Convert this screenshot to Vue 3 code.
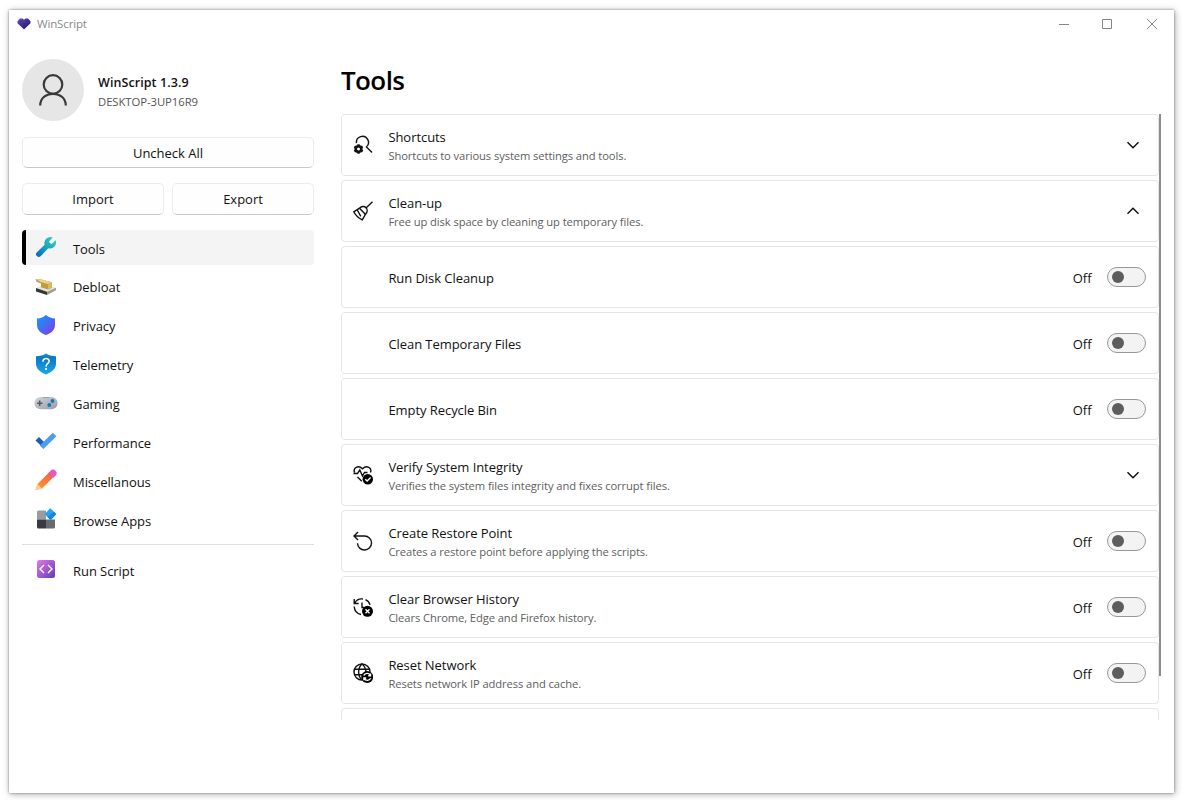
<script setup>
import { ref } from "vue";

const current = ref("Tools");

const pages = [
  "Tools",
  "Debloat",
  "Privacy",
  "Telemetry",
  "Gaming",
  "Performance",
  "Miscellanous",
  "Browse Apps",
];

const cards = ref([
  {
    icon: "search",
    title: "Shortcuts",
    text: "Shortcuts to various system settings and tools.",
    open: false,
  },
  {
    icon: "broom",
    title: "Clean-up",
    text: "Free up disk space by cleaning up temporary files.",
    open: true,
  },
  { title: "Run Disk Cleanup", on: false },
  { title: "Clean Temporary Files", on: false },
  { title: "Empty Recycle Bin", on: false },
  {
    icon: "heart",
    title: "Verify System Integrity",
    text: "Verifies the system files integrity and fixes corrupt files.",
    open: false,
  },
  {
    icon: "restore",
    title: "Create Restore Point",
    text: "Creates a restore point before applying the scripts.",
    on: false,
  },
  {
    icon: "history",
    title: "Clear Browser History",
    text: "Clears Chrome, Edge and Firefox history.",
    on: false,
  },
  {
    icon: "network",
    title: "Reset Network",
    text: "Resets network IP address and cache.",
    on: false,
  },
]);

const toggle = (card) => {
  if ("on" in card) {
    card.on = !card.on;
  } else {
    card.open = !card.open;
  }
};
</script>

<template>
  <div class="window">
    <header class="titlebar">
      <svg class="logo" viewBox="0 0 14 12">
        <defs>
          <linearGradient id="logo" x1="0" y1="0" x2="1" y2="1">
            <stop offset="0" stop-color="#5c4ac0" />
            <stop offset="1" stop-color="#27125f" />
          </linearGradient>
        </defs>
        <path d="M3 .5h2.500L7 1.800 8.500.5H11l2.500 2.800v2L7 11.500.5 5.300v-2z" fill="url(#logo)" />
      </svg>
      <span class="app-name">WinScript</span>
      <svg class="controls" viewBox="0 0 100 12">
        <path d="M1 6.500h10M44.500 1.500h9v9h-9zM89 1l10 10M99 1L89 11" />
      </svg>
    </header>

    <div class="content">
      <aside>
        <div class="profile">
          <div class="avatar">
            <svg viewBox="0 0 30 34">
              <circle cx="15" cy="11.500" r="9.300" />
              <path d="M2.200 32.500c0-7 5.300-11.700 12.800-11.700s12.800 4.700 12.800 11.700" />
            </svg>
          </div>
          <div>
            <p class="version">WinScript 1.3.9</p>
            <p class="machine">DESKTOP-3UP16R9</p>
          </div>
        </div>

        <div class="buttons">
          <button class="wide">Uncheck All</button>
          <button>Import</button>
          <button>Export</button>
        </div>

        <nav>
          <a
            v-for="page in pages"
            :key="page"
            :class="{ active: page === current }"
            @click="current = page"
          >
            <svg viewBox="0 0 24 24">
              <g v-if="page === 'Tools'">
                <linearGradient id="wrench" x1="1" y1="0" x2="0" y2="1">
                  <stop offset="0" stop-color="#3bd5b4" />
                  <stop offset=".5" stop-color="#16a6bd" />
                  <stop offset="1" stop-color="#0067bd" />
                </linearGradient>
                <path
                  fill="url(#wrench)"
                  d="M18.800 2.500a6 6 0 0 0-8.100 7.300L2.900 17.200a2.700 2.700 0 0 0 3.900 3.900l7.500-7.900a6 6 0 0 0 7.300-8l-3.400 3.400c-.5.500-1.100.5-1.600 0l-1.100-1.100c-.5-.5-.5-1.100 0-1.600z"
                />
              </g>
              <g v-else-if="page === 'Debloat'">
                <path fill="#e4e4e4" d="M2 14l7-3 13 2.700-9 4.300z" />
                <path fill="#34383a" d="M2 14l11 3.800v3.200L2 17.500z" />
                <path fill="#9a9d9f" d="M13 17.800l9-4.100v2.600l-9 4.700z" />
                <path fill="#c39a3e" d="M1.500 5l6 .5L18 8.300v5.500l-4 1.700-7-2.300V9.500L2.500 7.800z" />
                <path fill="#ead093" d="M1.500 5l6 .5L18 8.300l-4 1.700-7.500-2z" />
                <path fill="#ddb75e" d="M14 10l4-1.700v5.500l-4 1.700z" />
              </g>
              <g v-else-if="page === 'Privacy'">
                <linearGradient id="shield" x1="0" y1="0" x2="1" y2="1">
                  <stop offset="0" stop-color="#149cf5" />
                  <stop offset=".5" stop-color="#456cf3" />
                  <stop offset="1" stop-color="#9331de" />
                </linearGradient>
                <path
                  fill="url(#shield)"
                  d="M12 2c2.700 2.200 5.500 3.200 9 3.500v6.200c0 5.100-3.300 8.300-9 10.300-5.700-2-9-5.200-9-10.300V5.500c3.500-.3 6.300-1.300 9-3.500z"
                />
              </g>
              <g v-else-if="page === 'Telemetry'">
                <linearGradient id="help" x1="0" y1="0" x2="0" y2="1">
                  <stop offset="0" stop-color="#1593dc" />
                  <stop offset=".2" stop-color="#0a78c3" />
                  <stop offset="1" stop-color="#1da5ee" />
                </linearGradient>
                <path
                  fill="url(#help)"
                  d="M12 1.500c3 2 6 2.500 10 2.700v7.600c0 4.900-4 8.400-10 10.700C6 20.200 2 16.700 2 11.800V4.200C6 4 9 3.500 12 1.500z"
                />
                <path
                  d="M9 9.200c0-3.700 6.200-3.500 6.200 0 0 2.100-3.100 2.400-3.100 5"
                  fill="none"
                  stroke="#fff"
                  stroke-width="1.500"
                  stroke-linecap="round"
                />
                <circle cx="12" cy="17" r="1.100" fill="#fff" />
              </g>
              <g v-else-if="page === 'Gaming'">
                <linearGradient id="pad" x1="0" y1="0" x2="1" y2="1">
                  <stop offset="0" stop-color="#d2d6da" />
                  <stop offset="1" stop-color="#969ca5" />
                </linearGradient>
                <rect x=".4" y="6" width="23.200" height="12.300" rx="6.100" fill="url(#pad)" />
                <path d="M10 6v1M12 6v1M14 6v1" stroke="#747b82" />
                <path d="M3 12.200h5.500M5.700 9.500V15" stroke="#555b63" stroke-width="1.500" />
                <circle cx="18.500" cy="10" r="1.900" fill="#1875b9" />
                <circle cx="15.300" cy="14" r="1.900" fill="#1875b9" />
              </g>
              <g v-else-if="page === 'Performance'">
                <path fill="#1b5fbd" d="M1.500 11.500l3.500-3.500 5.300 5.200-3.300 3.500z" />
                <path fill="#4a9cf5" d="M5.800 16.500L18.800 3.800l3.600 3.500L9.400 20z" />
              </g>
              <g v-else-if="page === 'Miscellanous'">
                <linearGradient id="pencil" x1="1" y1="0" x2="0" y2="1">
                  <stop offset="0" stop-color="#f85747" />
                  <stop offset="1" stop-color="#ffa12b" />
                </linearGradient>
                <path fill="url(#pencil)" d="M3.500 16L15.500 4l4.500 4.500L8 20.500 1.500 22z" />
                <path fill="#ffd08b" d="M3.500 16L8 20.500l-6.500 1.800z" />
                <path fill="#e955c3" d="M14.500 5l2-2.200a3.500 3.500 0 0 1 5 5l-2.200 2z" />
              </g>
              <g v-else>
                <path fill="#989da2" d="M4.500 3.500H12v9H3V5a1.500 1.500 0 0 1 1.500-1.500z" />
                <path fill="#373a3e" d="M3 12.500h9v9H4.500A1.500 1.500 0 0 1 3 20z" />
                <path fill="#666b70" d="M12 12.500h9V20a1.500 1.500 0 0 1-1.500 1.500H12z" />
                <path fill="#22a3f4" d="M16.900 1.700l4.800 4.800c.4.400.4.900 0 1.300l-4.500 4.700c-.4.400-.9.400-1.300 0L11.200 7.700c-.4-.4-.4-.9 0-1.300l4.500-4.700c.4-.4.800-.4 1.200 0z" />
                <path fill="#1288e4" d="M21.700 7.800l-4.500 4.700c-.4.400-.9.400-1.300 0L13.500 10l6.300-5.400 1.900 1.900c.4.400.4.900 0 1.300z" />
              </g>
            </svg>
            {{ page }}
          </a>
        </nav>
        <nav class="run">
          <a>
            <svg viewBox="0 0 24 24">
              <linearGradient id="code" x1="0" y1="0" x2="1" y2="1">
                <stop offset="0" stop-color="#e377e8" />
                <stop offset="1" stop-color="#6739b8" />
              </linearGradient>
              <rect x="3" y="3" width="18" height="18" rx="2.500" fill="url(#code)" />
              <path
                d="M10 8l-4 4 4 4M14 8l4 4-4 4"
                fill="none"
                stroke="#fff"
                stroke-width="1.400"
              />
            </svg>
            Run Script
          </a>
        </nav>
      </aside>

      <main>
        <h1>Tools</h1>
        <div class="scroll">
          <div class="list">
            <section v-for="card in cards" :key="card.title" @click="toggle(card)">
              <div class="glyph">
                <svg v-if="card.icon" viewBox="0 0 20 20">
                  <g v-if="card.icon === 'search'">
                    <path d="M3.500 8.200A6 6 0 1 1 13 12.200M13 11.500l6 6" />
                    <circle cx="5.500" cy="14" r="2.800" stroke-width="2.600" />
                    <path
                      d="M5.500 9.300v2M5.500 16.700v2M1.400 11.600l1.800 1.100M7.800 15.300l1.800 1.100M1.400 16.400l1.800-1.100M7.800 12.700l1.800-1.100"
                      stroke-width="2.400"
                    />
                  </g>
                  <g v-else-if="card.icon === 'broom'">
                    <path d="M19.500.8l-6.500 6.200M6.500 7.200c2-2 4.800-2.200 6.500-.5s1.500 4.500-.5 6.500L9.300 18.900C5.500 17 2.500 14.500.8 10.800z" />
                    <path d="M6.500 7.200l6 6.300M4.300 9l3.500 6.300" />
                  </g>
                  <g v-else-if="card.icon === 'heart'">
                    <path d="M1.600 7.500C-.3 3 5.200-.5 9.500 3.800c4.300-4.300 9.800-.8 7.900 3.700M4.500 12l4.300 4.300M.5 8.500h4L6.800 5l2.700 6 2-3.500h3" />
                    <circle class="solid" cx="14.800" cy="14.200" r="5.200" />
                    <path class="light" d="M12.300 14.300l1.800 1.800 3.500-3.600" />
                  </g>
                  <g v-else-if="card.icon === 'restore'">
                    <path d="M5 1L1 5l4 4M1 5h10.500a7 7 0 1 1-7 7.300" stroke-width="1.400" />
                  </g>
                  <g v-else-if="card.icon === 'history'">
                    <path d="M1.200 2v4.500h4.500M1.800 6A8 8 0 0 1 10 2M12.500 2.600c2.400 1 4 3 4.500 5.300M1.200 9.500c.2 4.300 3 7.200 6.800 8M9 5.500v5h2" />
                    <circle class="solid" cx="14.500" cy="14.300" r="5.500" />
                    <path class="light" d="M12.500 12.300l4 4M16.500 12.300l-4 4" />
                  </g>
                  <g v-else>
                    <circle cx="9" cy="9" r="8" />
                    <path d="M1.500 6.200h15M1.500 11.800h8M9 17c-4.500-4-4.500-12 0-16 2.700 2.200 3.800 4.500 3.900 8" />
                    <circle class="solid" cx="14.200" cy="13.900" r="6" />
                    <path class="light" d="M10.800 12.500a3.600 3.600 0 0 1 6.400-.3M17.500 10.500v2.300h-2.300M17.600 15.300a3.600 3.600 0 0 1-6.400.3M10.900 17.300V15h2.300" />
                  </g>
                </svg>
              </div>
              <div class="label">
                <p class="title">{{ card.title }}</p>
                <p v-if="card.text" class="text">{{ card.text }}</p>
              </div>
              <template v-if="'on' in card">
                <span class="state">{{ card.on ? "On" : "Off" }}</span>
                <span class="switch" :class="{ on: card.on }"></span>
              </template>
              <svg v-else class="chevron" :class="{ up: card.open }" viewBox="0 0 14 8">
                <path d="M1.500 1.300L7 6.700l5.500-5.400" />
              </svg>
            </section>
            <section></section>
          </div>
          <div class="scrollbar"></div>
        </div>
      </main>
    </div>
  </div>
</template>

<style>
body {
  background: #fff;
}

#app {
  display: flow-root;
  height: 800px;
  overflow: hidden;
}
</style>

<style scoped>
.window {
  box-sizing: border-box;
  width: 1165px;
  height: 783px;
  margin: 10px 0 0 9px;
  background-color: #fff;
  box-shadow: 0 0 2px rgba(0, 0, 0, 0.4), 1px 1px 7px rgba(0, 0, 0, 0.35);
  font-family: "Open Sans", "Noto Sans", sans-serif;
  font-size: 13px;
  letter-spacing: -0.06px;
  color: #111;
}

p,
h1 {
  margin: 0;
}

.titlebar {
  display: flex;
  align-items: center;
  height: 27px;
  padding: 0 17px 0 8px;
}

.logo {
  width: 14px;
  height: 12px;
}

.app-name {
  margin-left: 6px;
  font-size: 11.5px;
  letter-spacing: -0.15px;
  color: #8a8a8a;
}

.controls {
  width: 100px;
  height: 12px;
  margin-left: auto;
  margin-right: -1px;
  fill: none;
  stroke: #858585;
}

.content {
  display: flex;
  padding-left: 13px;
}

aside {
  width: 292px;
  padding-top: 22px;
}

.profile {
  display: flex;
  align-items: center;
  gap: 14px;
}

.avatar {
  display: flex;
  width: 62px;
  height: 62px;
  border-radius: 50%;
  background-color: #e6e6e6;
}

.avatar svg {
  width: 30px;
  height: 34px;
  margin: auto;
  fill: none;
  stroke: #393939;
  stroke-width: 2.2;
}

.version {
  margin-top: 3px;
  font-size: 12.5px;
  font-weight: 600;
  letter-spacing: 0.08px;
  line-height: 19px;
}

.machine {
  font-size: 11.3px;
  line-height: 19px;
  color: #555;
}

.buttons {
  display: grid;
  grid-template-columns: 1fr 1fr;
  gap: 15px 8px;
  margin-top: 16px;
}

.wide {
  grid-column: span 2;
}

button {
  height: 31px;
  padding: 0;
  border: 1px solid #ececec;
  border-bottom-color: #c9c9c9;
  border-radius: 5px;
  background-color: #fefefe;
  font: inherit;
  letter-spacing: 0;
  color: inherit;
}

button:not(.wide) {
  height: 32px;
}

nav {
  display: flex;
  flex-direction: column;
  gap: 3.9px;
  margin-top: 15px;
}

nav a {
  display: flex;
  align-items: center;
  gap: 15.5px;
  box-sizing: border-box;
  height: 35px;
  padding: 2px 0 0 7.5px;
  border-left: 4px solid transparent;
  border-radius: 4px;
}

nav a.active {
  border-left-color: #000;
  background-color: #f4f4f4;
}

nav svg {
  width: 24px;
  height: 24px;
  margin-top: -3px;
}

.run {
  margin-top: 7px;
  padding-top: 7px;
  border-top: 1px solid #e0e0e0;
}

main {
  width: 820px;
  margin-left: 27px;
}

h1 {
  padding-top: 24px;
  height: 53px;
  font-size: 26px;
  font-weight: 600;
  letter-spacing: -0.6px;
  line-height: 38px;
  color: #000;
}

.scroll {
  display: flex;
  height: 606px;
  overflow: hidden;
}

.list {
  display: flex;
  flex-direction: column;
  gap: 4px;
  width: 818px;
}

section {
  display: flex;
  flex-shrink: 0;
  align-items: center;
  box-sizing: border-box;
  height: 62px;
  padding-right: 12px;
  border: 1px solid #e5e5e5;
  border-radius: 4px;
}

.glyph {
  width: 46.4px;
}

.glyph svg {
  display: block;
  width: 20px;
  height: 20px;
  margin-left: 11px;
  fill: none;
  stroke: #111;
  stroke-width: 1.4;
}

.glyph .solid {
  fill: #000;
  stroke: none;
}

.glyph .light {
  stroke: #fff;
}

.label {
  flex: 1;
  padding-top: 1px;
}

.title {
  line-height: 20px;
}

.title:not(:last-child) {
  padding-top: 2px;
  line-height: 19px;
}

.text {
  font-size: 11.2px;
  letter-spacing: -0.09px;
  line-height: 18px;
  color: #606060;
}

.state {
  padding-top: 1px;
  margin-right: 15.5px;
}

.switch {
  display: flex;
  align-items: center;
  box-sizing: border-box;
  width: 39px;
  height: 20px;
  margin-top: -1px;
  padding: 0 4px;
  border: 1px solid #989898;
  border-radius: 10px;
  background-color: #f3f3f3;
}

.switch::before {
  content: "";
  width: 12px;
  height: 12px;
  border-radius: 50%;
  background-color: #5d5d5d;
}

.switch.on {
  justify-content: flex-end;
}

.chevron {
  width: 14px;
  height: 8px;
  margin-right: 6.5px;
  fill: none;
  stroke: #111;
  stroke-width: 1.5;
}

.chevron.up {
  transform: rotate(180deg);
}

.scrollbar {
  width: 2px;
  height: 562px;
  background-color: #8c8c8c;
}
</style>
